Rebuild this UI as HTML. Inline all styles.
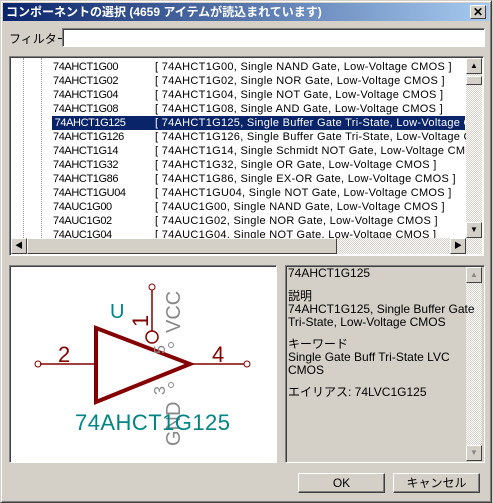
<!DOCTYPE html>
<html><head><meta charset="utf-8"><style>
*{margin:0;padding:0;box-sizing:border-box}
body{width:493px;height:503px;background:#d4d0c8;font-family:"Liberation Sans","Noto Sans CJK JP",sans-serif;font-size:12px;position:relative;overflow:hidden}
.win{position:absolute;left:0;top:0;width:492px;height:503px;border:1px solid;border-color:#d4d0c8 #404040 #404040 #d4d0c8;box-shadow:inset 1px 1px #fff,inset -1px -1px #808080}
.title{position:absolute;left:3px;top:3px;width:486px;height:18px;background:linear-gradient(to right,#0a246a,#a6caf0);color:#fff;font-weight:bold;font-size:12px;line-height:18px;padding-left:3px}
.close{position:absolute;left:470px;top:5px;width:16px;height:14px;background:#d4d0c8;border:1px solid;border-color:#fff #404040 #404040 #fff;font-size:12px;line-height:12px;text-align:center;color:#000;font-weight:bold}
.sunk{position:absolute;border:1px solid;border-color:#808080 #fff #fff #808080;box-shadow:inset 1px 1px #404040}
.row{position:absolute;left:53px;height:14px;line-height:14px;font-family:"Liberation Sans","Noto Sans CJK JP",sans-serif;font-size:11px;letter-spacing:-0.4px;white-space:nowrap;color:#000}
.row span{position:absolute;left:102px;letter-spacing:0.3px}
.sel{background:#0a246a;color:#fff;width:413px}
.btn{position:absolute;background:#d4d0c8;border:1px solid;border-color:#fff #404040 #404040 #fff;box-shadow:inset -1px -1px #808080;text-align:center;line-height:18px;font-size:12px}
.arr{position:absolute;width:16px;height:16px;background:#d4d0c8;border:1px solid;border-color:#fff #404040 #404040 #fff;font-size:8px;line-height:14px;text-align:center}
.track{position:absolute;background:repeating-conic-gradient(#d4d0c8 0 25%,#fff 0 50%) 0 0/2px 2px}
.info div{position:absolute;left:288px;font-size:12px;line-height:13px;white-space:nowrap}
</style></head><body>
<div class="win"></div>
<div class="title">コンポーネントの選択 (4659 アイテムが読込まれています)</div>
<div class="close">✕</div>
<div style="position:absolute;left:9px;top:30px;">フィルター:</div>
<div class="sunk" style="left:62px;top:28px;width:423px;height:19px;background:#fff"></div>

<div class="sunk" style="left:9px;top:56px;width:475px;height:200px;background:#fff"></div>
<div style="position:absolute;left:23px;top:58px;height:180px;border-left:1px dotted #999"></div>
<div style="position:absolute;left:11px;top:58px;width:455px;height:180px;overflow:hidden">
<div style="position:absolute;left:30px;top:0;height:180px;border-left:1px dotted #999"></div>
</div>
<div style="position:absolute;left:11px;top:58px;width:455px;height:180px;overflow:hidden">
<div class="row" style="top:2px;left:42px">74AHCT1G00<span>[ 74AHCT1G00, Single NAND Gate, Low-Voltage CMOS ]</span></div>
<div class="row" style="top:16px;left:42px">74AHCT1G02<span>[ 74AHCT1G02, Single NOR Gate, Low-Voltage CMOS ]</span></div>
<div class="row" style="top:30px;left:42px">74AHCT1G04<span>[ 74AHCT1G04, Single NOT Gate, Low-Voltage CMOS ]</span></div>
<div class="row" style="top:44px;left:42px">74AHCT1G08<span>[ 74AHCT1G08, Single AND Gate, Low-Voltage CMOS ]</span></div>
<div class="row sel" style="top:58px;left:41px">&nbsp;74AHCT1G125<span style="left:103px">[ 74AHCT1G125, Single Buffer Gate Tri-State, Low-Voltage CMOS ]</span></div>
<div class="row" style="top:72px;left:42px">74AHCT1G126<span>[ 74AHCT1G126, Single Buffer Gate Tri-State, Low-Voltage CMOS ]</span></div>
<div class="row" style="top:86px;left:42px">74AHCT1G14<span>[ 74AHCT1G14, Single Schmidt NOT Gate, Low-Voltage CMOS ]</span></div>
<div class="row" style="top:100px;left:42px">74AHCT1G32<span>[ 74AHCT1G32, Single OR Gate, Low-Voltage CMOS ]</span></div>
<div class="row" style="top:114px;left:42px">74AHCT1G86<span>[ 74AHCT1G86, Single EX-OR Gate, Low-Voltage CMOS ]</span></div>
<div class="row" style="top:128px;left:42px">74AHCT1GU04<span>[ 74AHCT1GU04, Single NOT Gate, Low-Voltage CMOS ]</span></div>
<div class="row" style="top:142px;left:42px">74AUC1G00<span>[ 74AUC1G00, Single NAND Gate, Low-Voltage CMOS ]</span></div>
<div class="row" style="top:156px;left:42px">74AUC1G02<span>[ 74AUC1G02, Single NOR Gate, Low-Voltage CMOS ]</span></div>
<div class="row" style="top:170px;left:42px">74AUC1G04<span>[ 74AUC1G04, Single NOT Gate, Low-Voltage CMOS ]</span></div>
</div>
<div class="track" style="left:466px;top:58px;width:16px;height:180px"></div>
<div class="arr" style="left:466px;top:58px">▲</div>
<div class="arr" style="left:466px;top:76px;height:9px"></div>
<div class="arr" style="left:466px;top:222px">▼</div>
<div class="track" style="left:11px;top:238px;width:471px;height:16px"></div>
<div class="arr" style="left:11px;top:238px">◀</div>
<div class="arr" style="left:27px;top:238px;width:310px"></div>
<div class="arr" style="left:450px;top:238px">▶</div>

<div class="sunk" style="left:9px;top:265px;width:268px;height:198px;background:#fff"></div>
<svg style="position:absolute;left:0;top:0" width="493" height="503">
<g stroke="#840000" fill="none">
<line x1="40" y1="364" x2="95" y2="364" stroke-width="1.5"/>
<circle cx="38" cy="364" r="3"/>
<line x1="190" y1="364" x2="244" y2="364" stroke-width="1.5"/>
<circle cx="247" cy="364" r="3"/>
<line x1="152" y1="290" x2="152" y2="331" stroke-width="1.5"/>
<circle cx="152" cy="287" r="3"/>
<circle cx="152" cy="337" r="6" stroke-width="1.5"/>
<path d="M96 328 L190 364 L96 402 Z" stroke-width="4" stroke-linejoin="miter"/>
</g>
<g stroke="#888" fill="none"><circle cx="171" cy="345" r="2.5"/><circle cx="171" cy="385" r="2.5"/></g>
<g font-family="Liberation Sans, sans-serif">
<text x="110" y="318" font-size="20" fill="#008484">U</text>
<text x="58" y="362" font-size="22" fill="#840000">2</text>
<text x="212" y="362" font-size="22" fill="#840000">4</text>
<text transform="translate(148,327) rotate(-90)" font-size="22" fill="#840000">1</text>
<text transform="translate(180,333) rotate(-90)" font-size="20" fill="#888">VCC</text>
<text transform="translate(180,446) rotate(-90)" font-size="20" fill="#888">GND</text>
<text transform="translate(165,354) rotate(-90)" font-size="16" fill="#888">5</text>
<text transform="translate(165,395) rotate(-90)" font-size="16" fill="#888">3</text>
<text x="75" y="430" font-size="22" fill="#008484" textLength="155">74AHCT1G125</text>
</g>
</svg>

<div class="sunk" style="left:285px;top:265px;width:200px;height:198px"></div>
<div class="track" style="left:466px;top:267px;width:16px;height:194px"></div>
<div class="arr" style="left:466px;top:267px;color:#888">▲</div>
<div class="arr" style="left:466px;top:445px;color:#888">▼</div>
<div class="info">
<div style="top:267px">74AHCT1G125</div>
<div style="top:290px">説明</div>
<div style="top:303px">74AHCT1G125, Single Buffer Gate</div>
<div style="top:316px">Tri-State, Low-Voltage CMOS</div>
<div style="top:338px">キーワード</div>
<div style="top:351px">Single Gate Buff Tri-State LVC</div>
<div style="top:364px">CMOS</div>
<div style="top:386px">エイリアス: 74LVC1G125</div>
</div>

<div class="btn" style="left:298px;top:473px;width:87px;height:20px">OK</div>
<div class="btn" style="left:393px;top:473px;width:87px;height:20px">キャンセル</div>
</body></html>
